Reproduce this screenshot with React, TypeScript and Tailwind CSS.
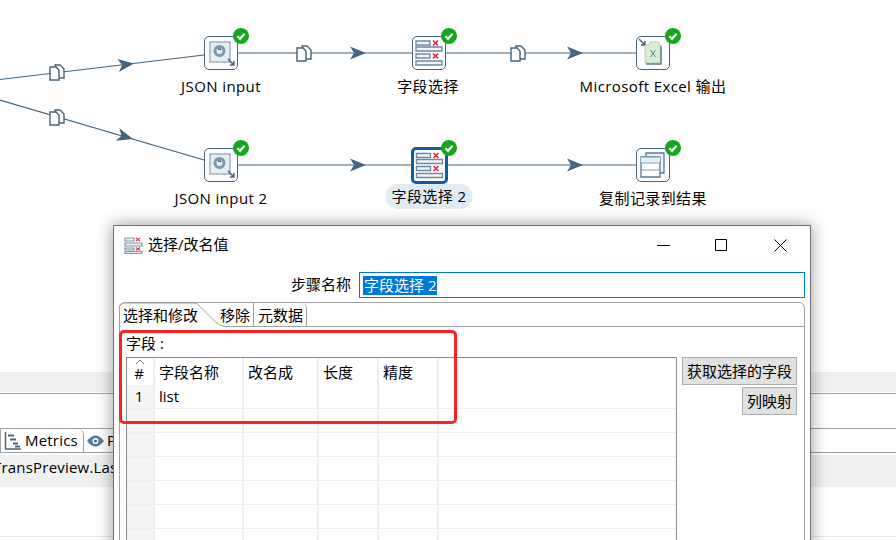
import React from 'react';

const font = "font-['Open_Sans','Noto_Sans_CJK_SC',sans-serif]";
const LINE = '#44647f';

const CopyIcon = ({ x, y }: { x: number; y: number }) => (
    <g transform={`translate(${x - 8} ${y - 8})`} fill="#fff" stroke={LINE} strokeWidth="1.4">
        <path d="M6 1h5l4 4v9h-5z" />
        <path d="M1 3h6l3 3v10H1z" />
    </g>
);

const Arrow = ({ x, y, angle = 0 }: { x: number; y: number; angle?: number }) => (
    <path transform={`translate(${x} ${y}) rotate(${angle})`} d="M0 0L-16-6.500-12 0-16 6.500z" fill={LINE} />
);

const Edges = () => (
    <svg className="absolute inset-0" width="896" height="372" fill="none">
        <g stroke={LINE} strokeWidth="1.2">
            <path d="M0 79.5L204 55" />
            <path d="M0 100L204 160" />
            <path d="M237 53H412" />
            <path d="M446 53H636" />
            <path d="M237 165H412" />
            <path d="M446 165H636" />
        </g>
        <Arrow x={134} y={63.5} angle={-7} />
        <Arrow x={133} y={139} angle={16} />
        <Arrow x={366} y={53} />
        <Arrow x={583} y={53} />
        <Arrow x={366} y={165} />
        <Arrow x={583} y={165} />
        <CopyIcon x={57} y={72} />
        <CopyIcon x={57} y={117} />
        <CopyIcon x={304} y={53} />
        <CopyIcon x={518} y={53} />
    </svg>
);

const JsonGlyph = () => (
    <>
        <path d="M6 6h20v20h-20z" fill="#e6eef5" stroke="#9fb2c2" strokeWidth="1.5" />
        <circle cx="15.5" cy="15" r="4.5" fill="none" stroke="#7f98ad" strokeWidth="3" />
        <path d="M14 13a3 3 0 0 1 3 1" fill="none" stroke="#3f5f7a" strokeWidth="1.5" />
        <path d="M24 23l6 6m0-4v4h-4" fill="none" stroke={LINE} strokeWidth="1.5" />
    </>
);

const SelectGlyph = () => (
    <>
        <g fill="#f3f7fa" stroke="#6d8ba3" strokeWidth="1.4">
            <path d="M4 5h14v4H4z" />
            <path d="M4 11h26v4H4z" />
            <path d="M4 18h14v4H4z" />
            <path d="M4 25h26v4H4z" />
        </g>
        <path d="M21 4.500l5 5m0-5l-5 5M21 17.500l5 5m0-5l-5 5" stroke="#ee1c3c" strokeWidth="1.6" fill="none" />
    </>
);

const ExcelGlyph = () => (
    <>
        <path d="M3 3l6 6m0-4v4H5" fill="none" stroke={LINE} strokeWidth="1.5" />
        <path d="M9 9h4l1-3h8l3 4v17H9z" fill="#d8ecd6" stroke="#b9cdbb" strokeWidth="1" />
        <path d="M25 10v18H10" fill="none" stroke="#5d7f98" strokeWidth="1.5" />
        <path d="M14.500 14l5 7m0-7l-5 7" stroke="#5d7f98" strokeWidth="1" fill="none" />
    </>
);

const CopyRowsGlyph = () => (
    <>
        <path d="M10 5h18v20H10z" fill="#eef4f9" stroke="#58788f" strokeWidth="1.3" />
        <path d="M5 9h19v20H5z" fill="#fff" stroke="#58788f" strokeWidth="1.3" />
        <path d="M5 9h19v5H5z" fill="#e3eef7" />
        <path d="M5 15h19M5 22h19M5 9h19" stroke="#7f9ab0" strokeWidth="1.2" fill="none" />
    </>
);

const Check = ({ selected }: { selected?: boolean }) => (
    <svg
        className={`absolute ${selected ? '-top-[10px] -right-[12px]' : '-top-[9px] -right-[12px]'}`}
        width="16"
        height="16"
        viewBox="0 0 16 16"
    >
        <circle cx="8" cy="8" r="8" fill="#12a81e" />
        <path d="M4.500 8.300l2.500 2.500 4.500-5" fill="none" stroke="#fff" strokeWidth="2.200" />
    </svg>
);

const StepNode = ({ pos, selected, children }: { pos: string; selected?: boolean; children: React.ReactNode }) => (
    <div
        className={`absolute ${pos} rounded-[5px] bg-white ${
            selected ? 'h-[37px] w-[37px] border-[3px] border-[#0f5c9e]' : 'h-[34px] w-[34px] border border-[#44647f]'
        }`}
    >
        <svg width="100%" height="100%" viewBox={selected ? '1.5 1.5 31 31' : '1 1 32 32'}>
            {children}
        </svg>
        <Check selected={selected} />
    </div>
);

const StepLabel = ({ pos, selected, children }: { pos: string; selected?: boolean; children: React.ReactNode }) => (
    <div
        className={`absolute ${pos} -translate-x-1/2 whitespace-nowrap rounded-full text-[15px] leading-[25px] tracking-[0.4px] text-black ${
            selected ? 'bg-[#e0ebf4] px-[6px]' : ''
        }`}
    >
        {children}
    </div>
);

const columns = [
    { label: '字段名称', width: 'w-[89px]' },
    { label: '改名成', width: 'w-[75px]' },
    { label: '长度', width: 'w-[60px]' },
    { label: '精度', width: 'w-[60px]' },
    { label: '', width: 'flex-1' },
];

const blankRows = [2, 3, 4, 5, 6, 7, 8];

const TableRow = ({ num, name }: { num?: number; name?: string }) => (
    <div className="flex h-6 border-b border-[#eeeff2]">
        <div className="flex w-[28px] items-center justify-center border-r-2 border-[#ebeff7] bg-[#f5f5f5] pr-[2px] leading-none">{num}</div>
        {columns.map((col, i) => (
            <div key={i} className={`${col.width} flex items-center pl-[4px] ${i < 4 ? 'border-r-2 border-[#ebeff7]' : ''}`}>
                {i === 0 ? name : ''}
            </div>
        ))}
    </div>
);

const Dialog = () => (
    <div className="absolute left-[113px] top-[225px] h-[340px] w-[698px] border border-[#707070] bg-white text-[15px] text-black shadow-[0_0_16px_rgba(0,0,0,0.4)]">
        <div className="flex h-[38px] items-center pl-[10px]">
            <svg width="19" height="17" viewBox="0 0 19 17" fill="#eef3f7" stroke="#7c96ab" strokeWidth="1.200">
                <path d="M1 1h9v3H1zM1 6h17v3H1zM1 11h9v2H1zM1 14.500h17v2H1z" />
                <path d="M12 1l4 3m0-3l-4 3M12 10.500l4 3m0-3l-4 3" stroke="#e23a50" fill="none" />
            </svg>
            <span className="ml-[5px] flex-1 pb-[2px] leading-none">选择/改名值</span>
            <div className="flex w-[176px] items-center pl-[23px]">
                <svg width="13" height="13" viewBox="0 0 13 13"><path d="M0 6.500h13" stroke="#000" /></svg>
                <svg className="ml-[45px]" width="12" height="12" viewBox="0 0 12 12" fill="none"><path d="M.5.500h11v11H.5z" stroke="#000" /></svg>
                <svg className="ml-[47px]" width="13" height="13" viewBox="0 0 13 13" fill="none"><path d="M.5.500l12 12m0-12l-12 12" stroke="#000" /></svg>
            </div>
        </div>
        <div className="mt-2 flex h-[26px] items-center justify-end pr-[5px]">
            <span className="mr-[8px] pb-[2px]">步骤名称</span>
            <div className="flex h-[26px] w-[446px] items-center border border-[#0078d7] pl-[3px]">
                <span className="bg-[#0078d7] px-px leading-[19px] text-white">字段选择 2</span>
            </div>
        </div>
        <div className="mx-[5px] mt-[4px] h-[300px] rounded-t-[6px] border border-[#a0a0a0]">
            <div className="flex h-6 border-b border-[#a0a0a0] leading-6">
                <div className="w-[80px] pl-[3px]">选择和修改</div>
                <div className="w-[54px] border-r border-[#a0a0a0] pl-[20px]">移除</div>
                <div className="w-[53px] rounded-tr-[5px] border-r border-[#a0a0a0] pl-[4px]">元数据</div>
            </div>
            <div className="pl-[6px] pr-[7px]">
                <div className="h-[30px] pt-[6px] leading-[20px]">字段 :</div>
                <div className="flex gap-[5px]">
                    <div className="h-[260px] w-[551px] border border-[#8c8c8c]">
                        <div className="flex h-[27px]">
                            <div className="relative flex w-[28px] items-end justify-center border-r-2 border-[#ebeff7] pr-[2px] leading-[24px]">
                                #
                                <svg className="absolute left-[8px] top-[1px]" width="10" height="6" viewBox="0 0 10 6" fill="none"><path d="M1 5l4-4 4 4" stroke="#777" /></svg>
                            </div>
                            {columns.map((col, i) => (
                                <div key={i} className={`${col.width} pl-[4px] leading-[28px] ${i < 4 ? 'border-r-2 border-[#ebeff7]' : ''}`}>
                                    {col.label}
                                </div>
                            ))}
                        </div>
                        <TableRow num={1} name="list" />
                        {blankRows.map((n) => (
                            <TableRow key={n} />
                        ))}
                    </div>
                    <div className="flex flex-col items-end gap-[2px]">
                        <button className="h-[28px] w-[115px] whitespace-nowrap border border-[#adadad] bg-[#e1e1e1] leading-none">获取选择的字段</button>
                        <button className="h-[28px] w-[55px] whitespace-nowrap border border-[#adadad] bg-[#e1e1e1] leading-none">列映射</button>
                    </div>
                </div>
            </div>
        </div>
        {/* active tab curve, also hides the tab bar line under the open tab */}
        <svg className="absolute left-[5px] top-[76px]" width="112" height="27" viewBox="0 0 112 27" fill="none">
            <path d="M1.500 24.500H107" stroke="#fff" strokeWidth="2" />
            <path d="M.5 25V6q0-5 5-5h69q4 0 7 4l15 15q4 4 11 5" stroke="#a0a0a0" />
        </svg>
    </div>
);

const Backdrop = () => (
    <div className="absolute inset-x-0 top-[372px] text-[15px] text-black">
        <div className="h-[21px]">
            <div className="h-[20px] bg-[#f0f0f0]" />
        </div>
        <div className="h-[35px] border-t border-[#a0a0a0]" />
        <div className="flex h-[25px] items-stretch border-t border-[#a0a0a0]">
            <div className="flex w-[84px] items-center rounded-tr-[6px] border-x border-b border-[#a0a0a0] pl-[3px]">
                <svg width="17" height="18" viewBox="0 0 17 18" fill="none" stroke="#44647f">
                    <path d="M1.500 0v17H17" strokeWidth="1.500" />
                    <path d="M4 3.500h6M6 7.500h6M9 11.500h5M11 14.500h5" strokeWidth="2" />
                </svg>
                <span className="ml-[4px] tracking-[0.2px]">Metrics</span>
            </div>
            <div className="flex flex-1 items-center border-b border-[#a0a0a0] pl-[3px]">
                <svg width="17" height="12" viewBox="0 0 17 12">
                    <path d="M0 6Q8.500-5 17 6 8.500 17 0 6z" fill="#5a7c97" />
                    <circle cx="8.500" cy="6" r="3" fill="#fff" />
                    <circle cx="8.500" cy="6" r="1.500" fill="#44647f" />
                </svg>
                <span className="ml-[3px]">P</span>
            </div>
        </div>
        <div className="mt-[2px] h-[32px] overflow-hidden whitespace-nowrap bg-[#f0f0f0] leading-[24px] -indent-[7px] tracking-[0.2px]">TransPreview.Las</div>
        <div className="h-[50px] border-b border-[#e8e8e8]" />
    </div>
);

export default function App() {
    return (
        <div className={`relative h-[540px] w-[896px] overflow-hidden bg-white ${font}`}>
            <div className="relative h-[372px]">
                <Edges />
                <StepNode pos="left-[204px] top-[36px]"><JsonGlyph /></StepNode>
                <StepNode pos="left-[412px] top-[36px]"><SelectGlyph /></StepNode>
                <StepNode pos="left-[636px] top-[36px]"><ExcelGlyph /></StepNode>
                <StepNode pos="left-[204px] top-[148px]"><JsonGlyph /></StepNode>
                <StepNode pos="left-[411px] top-[147px]" selected><SelectGlyph /></StepNode>
                <StepNode pos="left-[636px] top-[148px]"><CopyRowsGlyph /></StepNode>
                <StepLabel pos="left-[221px] top-[74px]">JSON input</StepLabel>
                <StepLabel pos="left-[428px] top-[74px]">字段选择</StepLabel>
                <StepLabel pos="left-[653px] top-[74px]">Microsoft Excel 输出</StepLabel>
                <StepLabel pos="left-[221px] top-[186px]">JSON input 2</StepLabel>
                <StepLabel pos="left-[429px] top-[184px]" selected>字段选择 2</StepLabel>
                <StepLabel pos="left-[653px] top-[186px]">复制记录到结果</StepLabel>
            </div>
            <Backdrop />
            <Dialog />
            <div className="absolute left-[119px] top-[330px] h-[94px] w-[338px] rounded-[5px] border-[3px] border-[#fb2420]" />
        </div>
    );
}
